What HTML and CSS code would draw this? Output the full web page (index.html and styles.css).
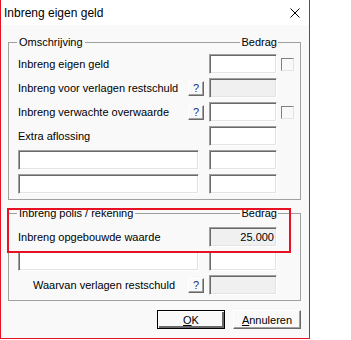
FILE: index.html
```html
<!DOCTYPE html>
<html lang="nl">
  <head>
    <meta charset="UTF-8" />
    <title>Inbreng eigen geld</title>
    <link rel="stylesheet" href="styles.css">
  </head>
  <body>
    <div class="window">
      <div class="titlebar">
        <span class="title">Inbreng eigen geld</span>
        <svg class="close" width="10" height="10" viewBox="0 0 10 10">
          <path d="M0.5 0.5 L9.5 9.5 M9.5 0.5 L0.5 9.5" stroke="#000" stroke-width="1" fill="none" />
        </svg>
      </div>

      <div class="content">
        <!-- Omschrijving -->
        <div class="group">
          <div class="group-head">
            <span class="edge-left"></span>
            <span class="caption">Omschrijving</span>
            <span class="rule"></span>
            <span class="caption">Bedrag</span>
            <span class="edge-right"></span>
          </div>
          <div class="group-body">
            <div class="row">
              <span class="label">Inbreng eigen geld</span>
              <input class="field" type="text" />
              <span class="check"></span>
            </div>
            <div class="row">
              <span class="label">Inbreng voor verlagen restschuld</span>
              <button class="help">?</button>
              <input class="field" type="text" disabled />
              <span class="check-slot"></span>
            </div>
            <div class="row">
              <span class="label">Inbreng verwachte overwaarde</span>
              <button class="help">?</button>
              <input class="field" type="text" />
              <span class="check"></span>
            </div>
            <div class="row">
              <span class="label">Extra aflossing</span>
              <input class="field" type="text" />
              <span class="check-slot"></span>
            </div>
            <div class="row">
              <input class="field wide" type="text" />
              <span class="label"></span>
              <input class="field" type="text" />
              <span class="check-slot"></span>
            </div>
            <div class="row">
              <input class="field wide" type="text" />
              <span class="label"></span>
              <input class="field" type="text" />
              <span class="check-slot"></span>
            </div>
          </div>
        </div>

        <!-- Polis / rekening -->
        <div class="group second">
          <div class="group-head">
            <span class="edge-left"></span>
            <span class="caption">Inbreng polis / rekening</span>
            <span class="rule"></span>
            <span class="caption">Bedrag</span>
            <span class="edge-right"></span>
          </div>
          <div class="group-body">
            <div class="row">
              <span class="label">Inbreng opgebouwde waarde</span>
              <input class="field" type="text" value="25.000" disabled />
              <span class="check-slot"></span>
            </div>
            <div class="row">
              <input class="field wide" type="text" />
              <span class="label"></span>
              <input class="field" type="text" />
              <span class="check-slot"></span>
            </div>
            <div class="row">
              <span class="label indent">Waarvan verlagen restschuld</span>
              <button class="help">?</button>
              <input class="field" type="text" disabled />
              <span class="check-slot"></span>
            </div>
          </div>
        </div>

        <div class="actions">
          <button class="btn default"><u>O</u>K</button>
          <button class="btn"><u>A</u>nnuleren</button>
        </div>
      </div>

      <div class="marker"></div>
    </div>
  </body>
</html>
```

FILE: styles.css
```css
body {
  margin: 0;
  background-color: #fff;
  font-family: "Liberation Sans", Arial, sans-serif;
  font-size: 11px;
  color: #000;
}
.window {
  position: relative;
  width: 310px;
  box-sizing: border-box;
  border: 1px solid #e81123;
  border-top: none;
  background-color: #f9f9f9;
}
.titlebar {
  display: flex;
  align-items: center;
  justify-content: space-between;
  height: 25px;
  padding: 0 9px 0 3px;
  background-color: #fff;
}
.title {
  font-size: 12px;
}
.close {
  display: block;
}
.content {
  padding: 11px 8px 9px 7px;
}
.group-head {
  display: flex;
  height: 13px;
  line-height: 13px;
}
.edge-left,
.rule,
.edge-right {
  align-self: flex-end;
  height: 6px;
  border-top: 1px solid #a0a0a0;
}
.edge-left {
  width: 8px;
  margin-right: 2px;
  border-left: 1px solid #a0a0a0;
}
.rule {
  flex: 1;
  margin: 0 2px;
}
.edge-right {
  width: 22px;
  margin-left: 1px;
  border-right: 1px solid #a0a0a0;
}
.group-body {
  display: flex;
  flex-direction: column;
  gap: 4px;
  padding: 5px 6px 5px 9px;
  border: 1px solid #a0a0a0;
  border-top: none;
}
.group.second {
  margin-top: 7px;
}
.group.second .group-body {
  padding-top: 7px;
}
.row {
  display: flex;
  align-items: center;
  height: 20px;
}
.label {
  flex: 1;
  white-space: nowrap;
}
.label.indent {
  padding-left: 15px;
}
.field {
  box-sizing: border-box;
  width: 68px;
  height: 20px;
  margin: 0;
  padding: 0 2px;
  border: 1px solid;
  border-color: #a0a0a0 #fff #fff #a0a0a0;
  box-shadow: inset 1px 1px #696969, inset -1px -1px #e3e3e3;
  background-color: #fff;
  font-family: inherit;
  font-size: 11px;
  color: #000;
  text-align: right;
}
.field:disabled {
  background-color: #f0f0f0;
  color: #000;
}
.field.wide {
  width: 181px;
  margin-right: 10px;
}
.help {
  box-sizing: border-box;
  width: 16px;
  height: 15px;
  margin: 0 5px 0 0;
  padding: 0;
  border: 1px solid;
  border-color: #fff #696969 #696969 #fff;
  box-shadow: inset -1px -1px #a0a0a0;
  background-color: #f9f9f9;
  font-family: inherit;
  font-size: 11px;
  line-height: 12px;
  color: #1c2f78;
}
.check,
.check-slot {
  width: 13px;
  height: 13px;
  margin-left: 4px;
  box-sizing: border-box;
}
.check {
  border: 1px solid;
  border-color: #808080 #e3e3e3 #e3e3e3 #808080;
  background-color: #f9f9f9;
}
.actions {
  display: flex;
  justify-content: flex-end;
  gap: 8px;
  margin-top: 9px;
}
.btn {
  box-sizing: border-box;
  width: 68px;
  height: 19px;
  margin: 0;
  padding: 0;
  border: 1px solid;
  border-color: #fff #696969 #696969 #fff;
  box-shadow: inset -1px -1px #a0a0a0;
  background-color: #f9f9f9;
  font-family: inherit;
  font-size: 11px;
  color: #000;
}
.btn.default {
  border: 1px solid #000;
  box-shadow: inset 1px 1px #fff, inset -2px -2px #696969;
}
.marker {
  position: absolute;
  left: 6px;
  top: 208px;
  width: 284px;
  height: 45px;
  box-sizing: border-box;
  border: 2px solid #e81123;
  z-index: 1;
}
```
